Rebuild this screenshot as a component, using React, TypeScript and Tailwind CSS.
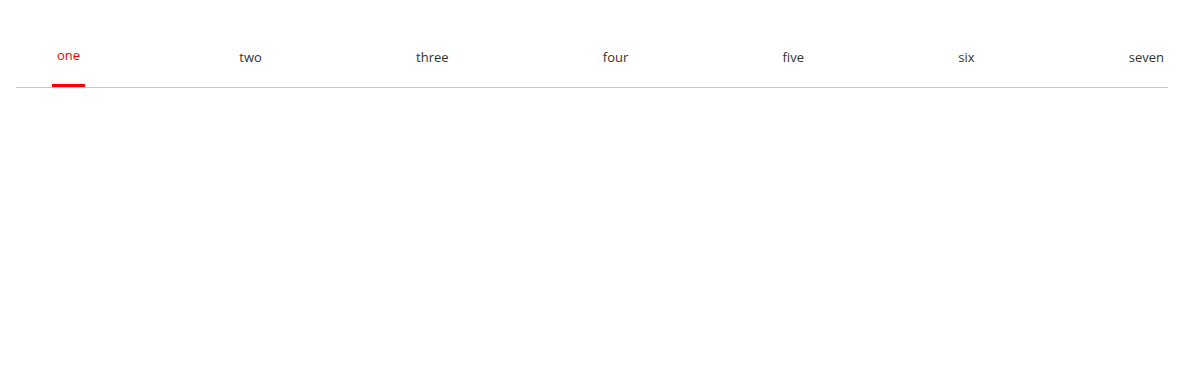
const tabs = ["one", "two", "three", "four", "five", "six", "seven"];

export default function App() {
  const active = 0;

  return (
    <div className="w-[1200px] h-[389px] bg-white" style={{ fontFamily: '"Open Sans", "Noto Sans", sans-serif' }}>
      <div className="ml-4 w-[1152px] border-b border-[#c8c8c8]">
        <div className="flex justify-between pl-[36px] pr-[4px]">
          {tabs.map((tab, i) =>
            i === active ? (
              <div key={tab} className="flex flex-col items-stretch pt-[46px]">
                <span className="px-[5px] text-[13px] leading-[18px] text-[#ff0000]">{tab}</span>
                <div className="mt-[20px] h-[3px] bg-[#ff0000]" />
              </div>
            ) : (
              <div key={tab} className="flex flex-col items-center pt-[48px] pb-[21px]">
                <span className="text-[13px] leading-[18px] text-[#333333]">{tab}</span>
              </div>
            )
          )}
        </div>
      </div>
    </div>
  );
}
